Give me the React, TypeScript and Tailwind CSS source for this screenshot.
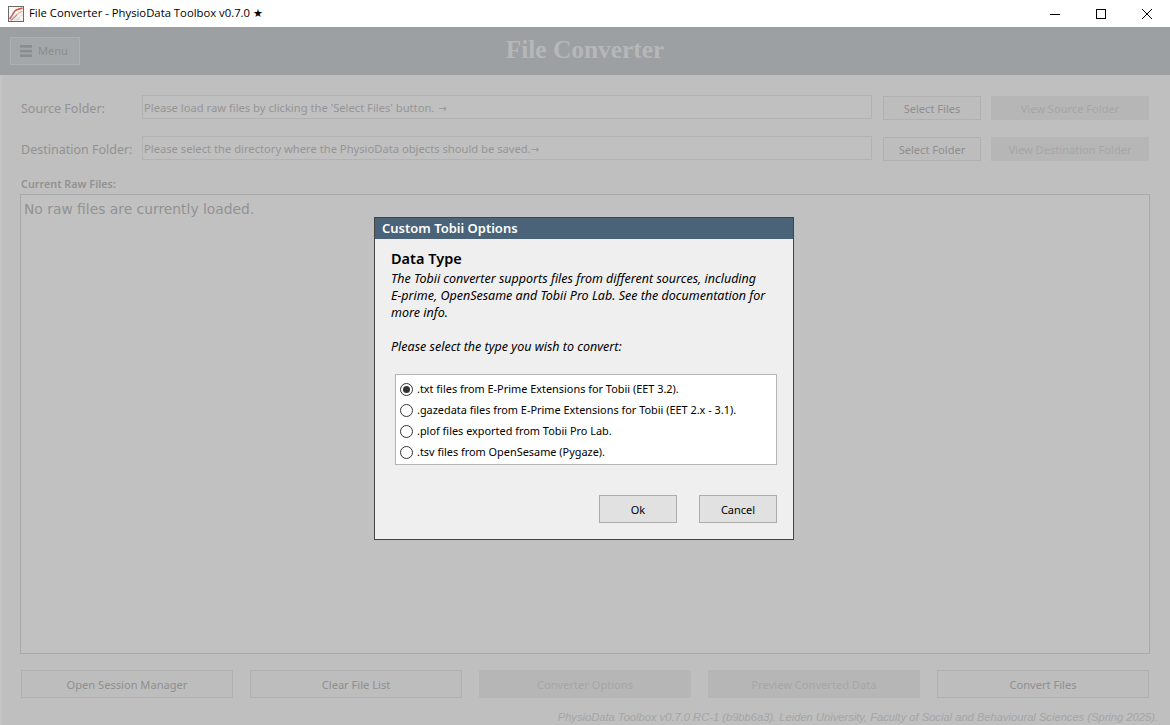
const font = "font-['Noto_Sans',sans-serif]"

const options = [
  '.txt files from E-Prime Extensions for Tobii (EET 3.2).',
  '.gazedata files from E-Prime Extensions for Tobii (EET 2.x - 3.1).',
  '.plof files exported from Tobii Pro Lab.',
  '.tsv files from OpenSesame (Pygaze).',
]

const AppIcon = () => (
  <svg width="16" height="16" viewBox="0 0 16 16" className="shrink-0">
    <rect x="0.5" y="0.5" width="15" height="15" fill="#fbf7f5" stroke="#6b6b6b" />
    <path d="M1.5 14.5 C4 9 8 8 10 11 L14.5 14.5 L1.5 14.5Z" fill="#dfe6f2" />
    <path d="M1.5 13 C4 11 5 6 8 4 L14.5 2" fill="none" stroke="#dc4a35" strokeWidth="1.4" />
    <path d="M2 14.5 C6 13 8 7 14.5 5" fill="none" stroke="#eeb08f" strokeWidth="1.2" />
    <path d="M1.5 12 L6 7.5 M3 14.5 L9 9" fill="none" stroke="#7d9bd6" strokeWidth="1" />
    <path d="M9 14.5 C11 12 12 10 14.5 9" fill="none" stroke="#e9c9a8" strokeWidth="1" />
  </svg>
)

const MenuBars = () => (
  <svg width="12" height="12" viewBox="0 0 12 12" fill="#8a8e90" className="shrink-0">
    <rect y="0" width="12" height="2.7" />
    <rect y="4.7" width="12" height="2.7" />
    <rect y="9.3" width="12" height="2.7" />
  </svg>
)

const WindowControls = () => (
  <div className="flex h-full">
    <div className="flex w-[46px] items-center justify-center">
      <svg width="10" height="10" viewBox="0 0 10 10"><path d="M0 5.5H10" stroke="#000" /></svg>
    </div>
    <div className="flex w-[46px] items-center justify-center">
      <svg width="10" height="10" viewBox="0 0 10 10"><rect x="0.5" y="0.5" width="9" height="9" fill="none" stroke="#000" /></svg>
    </div>
    <div className="flex w-[46px] items-center justify-center">
      <svg width="10" height="10" viewBox="0 0 10 10"><path d="M0 0L10 10M10 0L0 10" stroke="#000" strokeWidth="1" /></svg>
    </div>
  </div>
)

const PageButton = ({ label, disabled, className }: { label: string; disabled?: boolean; className: string }) => (
  <div
    className={`flex items-center justify-center border pt-[3px] text-[11.1px] ${
      disabled ? 'border-[#b6b6b6] bg-[#b6b6b6] text-[#a6a6a6]' : 'border-[#b0b0b0] bg-[#bdbdbd] text-[#8f8f8f]'
    } ${className}`}
  >
    {label}
  </div>
)

const FolderRow = ({ label, placeholder, gap, button, view }: { label: string; placeholder: string; gap: string; button: string; view: string }) => (
  <div className="flex h-[25px] items-start">
    <div className="flex h-[27px] w-[121px] items-center pt-[2px] text-[12.5px] text-[#929292]">{label}</div>
    <div className="flex h-[24px] w-[730px] items-center border border-[#b2b2b2] bg-[#c0c0c0] px-[1px] pt-[3px] text-[11.2px] text-[#959595]">
      {placeholder}
      <span className={`font-['DejaVu_Sans',sans-serif] text-[10px] ${gap}`}>→</span>
    </div>
    <PageButton label={button} className="mt-[1px] ml-[11px] h-[24px] w-[98px]" />
    <PageButton label={view} disabled className="mt-[1px] ml-[10px] h-[24px] w-[158px]" />
  </div>
)

const DialogButton = ({ label }: { label: string }) => (
  <div className="flex h-[28px] w-[78px] items-center justify-center border border-[#adadad] bg-[#e1e1e1] pt-[2px] text-[11px] text-black">
    {label}
  </div>
)

export default function App() {
  return (
    <div className={`relative flex h-[725px] w-[1170px] flex-col overflow-hidden bg-[#bfbfbf] ${font}`}>
      {/* window title bar */}
      <div className="flex h-[27px] items-center justify-between bg-white pl-[8px]">
        <div className="flex items-center gap-[5px] font-['Open_Sans',sans-serif] text-[11.3px] text-black">
          <AppIcon />
          <span>File Converter - PhysioData Toolbox v0.7.0 ★</span>
        </div>
        <WindowControls />
      </div>

      {/* app header */}
      <div className="relative flex h-[48px] items-center bg-[#9ca0a3] pl-[10px]">
        <div className="flex h-[28px] w-[70px] items-center justify-center gap-[6px] border border-[#adb0b2] bg-[#a4a7a9] pr-[2px] text-[11px] text-[#8a8e90]">
          <MenuBars />
          <span>Menu</span>
        </div>
        <div className="absolute inset-x-0 top-[7px] text-center font-['Liberation_Serif',serif] text-[25.4px] leading-[30px] font-bold text-[#b5b7b8]">
          File Converter
        </div>
      </div>

      {/* page body */}
      <div className="flex flex-1 flex-col border-l-2 border-[#c4c4c4] pt-[20px] pr-[21px] pl-[19px]">
        <div className="flex flex-col gap-[16px]">
          <FolderRow
            label="Source Folder:"
            placeholder="Please load raw files by clicking the 'Select Files' button."
            gap="ml-[4px]"
            button="Select Files"
            view="View Source Folder"
          />
          <FolderRow
            label="Destination Folder:"
            placeholder="Please select the directory where the PhysioData objects should be saved."
            gap="ml-0"
            button="Select Folder"
            view="View Destination Folder"
          />
        </div>
        <div className="mt-[15px] text-[10.8px] leading-[16px] font-semibold text-[#929292]">Current Raw Files:</div>
        <div className="mt-[2px] -ml-[1px] h-[460px] w-[1130px] border border-[#a9a9a9] bg-[#c1c1c1] px-[3px] py-[5px] font-['DejaVu_Sans',sans-serif] text-[13.85px] leading-[18px] text-[#929292]">
          No raw files are currently loaded.
        </div>
        <div className="mt-[16px] flex gap-[17px]">
          <PageButton label="Open Session Manager" className="h-[28px] w-[212px]" />
          <PageButton label="Clear File List" className="h-[28px] w-[212px]" />
          <PageButton label="Converter Options" disabled className="h-[28px] w-[212px]" />
          <PageButton label="Preview Converted Data" disabled className="h-[28px] w-[212px]" />
          <PageButton label="Convert Files" className="h-[28px] w-[212px]" />
        </div>
        <div className="-mr-[10px] mt-[12px] pr-[1px] text-right font-['Liberation_Sans',sans-serif] text-[11.16px] leading-[14px] text-[#a5a5a5] italic">
          PhysioData Toolbox v0.7.0 RC-1 (b9bb6a3). Leiden University, Faculty of Social and Behavioural Sciences (Spring 2025).
        </div>
      </div>

      {/* modal dialog */}
      <div className="absolute top-[217px] left-[374px] flex h-[323px] w-[420px] flex-col border border-[#444444] bg-[#efefef]">
        <div className="flex h-[21px] items-center bg-[#4a6378] px-[7px] text-[13px] font-semibold text-white">Custom Tobii Options</div>
        <div className="flex flex-1 flex-col px-[16px]">
          <div className="mt-[9px] text-[14.5px] leading-[20px] font-semibold text-black">Data Type</div>
          <p className="mt-[2px] w-[385px] text-[12.5px] leading-[17px] text-black italic">
            The Tobii converter supports files from different sources, including
            <br />
            E-prime, OpenSesame and Tobii Pro Lab. See the documentation for
            <br />
            more info.
          </p>
          <p className="mt-[17px] text-[12.5px] leading-[17px] text-black italic">Please select the type you wish to convert:</p>
          <div className="mt-[19px] ml-[4px] flex h-[91px] w-[382px] flex-col justify-center gap-[1px] border border-[#b5b5b5] bg-white pt-[2px] pl-[4px]">
            {options.map((o, i) => (
              <div key={o} className="flex h-[20px] items-center gap-[4px] text-[10.9px] text-black">
                <span className="flex h-[13px] w-[13px] items-center justify-center rounded-full border border-[#333333] bg-white">
                  {i === 0 && <span className="h-[7px] w-[7px] rounded-full bg-[#333333]" />}
                </span>
                <span>{o}</span>
              </div>
            ))}
          </div>
          <div className="mt-[30px] flex justify-end gap-[22px]">
            <DialogButton label="Ok" />
            <DialogButton label="Cancel" />
          </div>
        </div>
      </div>
    </div>
  )
}
